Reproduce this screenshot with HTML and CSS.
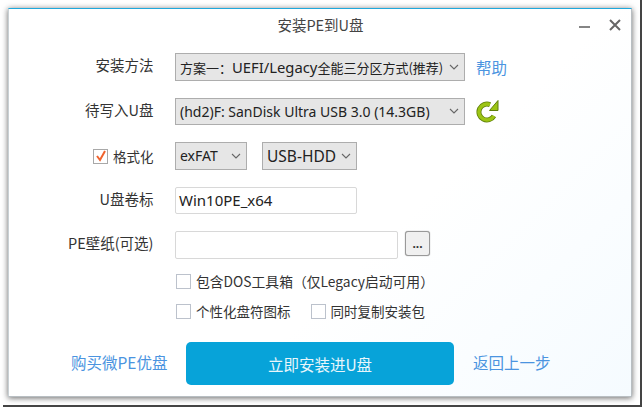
FILE: index.html
```html
<!DOCTYPE html>
<html lang="zh">
<head>
<meta charset="utf-8">
<title>安装PE到U盘</title>
<link rel="stylesheet" href="styles.css">
</head>
<body>
<div class="window">
  <header class="titlebar">
    <span class="title">安装PE到U盘</span>
    <div class="winctl">
      <svg width="12" height="12" viewBox="0 0 12 12"><path d="M0 8h11" stroke="#666" stroke-width="1.6"/></svg>
      <svg width="12" height="12" viewBox="0 0 12 12"><path d="M1 1l10 10M11 1L1 11" stroke="#666" stroke-width="2"/></svg>
    </div>
  </header>
  <main class="form">
    <div class="row">
      <label class="lbl">安装方法</label>
      <div class="select w290 cjk13"><span>方案一：<span class="latin-wide">UEFI/Legacy</span>全能三分区方式(推荐)</span><svg class="chev" width="10" height="6" viewBox="0 0 10 6"><path d="M1 1l4 4 4-4" fill="none" stroke="#666" stroke-width="1.1"/></svg></div>
      <a class="link help">帮助</a>
    </div>
    <div class="row">
      <label class="lbl">待写入U盘</label>
      <div class="select w290 latin14"><span>(hd2)F: SanDisk Ultra USB 3.0 (14.3GB)</span><svg class="chev" width="10" height="6" viewBox="0 0 10 6"><path d="M1 1l4 4 4-4" fill="none" stroke="#666" stroke-width="1.1"/></svg></div>
      <svg class="refresh" width="24" height="24" viewBox="0 0 24 24">
        <path d="M17.9 17A8 8 0 1 1 14 5.6" fill="none" stroke="#5f7f0a" stroke-width="5"/>
        <path d="M17.9 17A8 8 0 1 1 14 5.6" fill="none" stroke="#9cc414" stroke-width="3.4"/>
        <path d="M22 1.5V11.5H13.5Z" fill="#9cc414" stroke="#5f7f0a" stroke-width="1" stroke-linejoin="round"/>
      </svg>
    </div>
    <div class="row">
      <div class="lbl fmt">
        <span class="check on"><svg width="12" height="12" viewBox="0 0 12 12"><path d="M2 6l3 4 5-9" fill="none" stroke="#f0622d" stroke-width="2"/></svg></span>
        <span>格式化</span>
      </div>
      <div class="select w72 latin14"><span>exFAT</span><svg class="chev" width="10" height="6" viewBox="0 0 10 6"><path d="M1 1l4 4 4-4" fill="none" stroke="#666" stroke-width="1.1"/></svg></div>
      <div class="select w95 latin155"><span>USB-HDD</span><svg class="chev" width="10" height="6" viewBox="0 0 10 6"><path d="M1 1l4 4 4-4" fill="none" stroke="#666" stroke-width="1.1"/></svg></div>
    </div>
    <div class="row">
      <label class="lbl">U盘卷标</label>
      <div class="input w182">Win10PE_x64</div>
    </div>
    <div class="row">
      <label class="lbl">PE壁纸(可选)</label>
      <div class="input w223"></div>
      <button class="dots">...</button>
    </div>
    <div class="opts o1">
      <span class="opt wide"><span class="check"></span>包含DOS工具箱（仅Legacy启动可用）</span>
    </div>
    <div class="opts o2">
      <span class="opt"><span class="check"></span>个性化盘符图标</span>
      <span class="opt"><span class="check"></span>同时复制安装包</span>
    </div>
  </main>
  <footer class="actions">
    <a class="link buy">购买微PE优盘</a>
    <button class="install">立即安装进U盘</button>
    <a class="link back">返回上一步</a>
  </footer>
</div>
<div class="edge-right"></div>
<div class="edge-bottom"></div>
</body>
</html>
```
FILE: styles.css
```css
* { box-sizing: border-box; }
html, body { margin: 0; height: 100%; background: #fff; overflow: hidden; }
body {
  padding: 8px 0 0 8px;
  font-family: "Noto Sans CJK SC", "Noto Sans", sans-serif;
  font-size: 14.5px;
  color: #333;
}
.window {
  width: 624px;
  height: 389px;
  background: linear-gradient(135deg, #fff 60%, #f5fbff 100%);
  border-top: 1px solid #1ea8dc;
  border-left: 1px solid #c8d0d4;
  border-right: 1px solid #b8bec2;
  border-bottom: 1px solid #b8bec2;
  box-shadow: 0 1px 6px rgba(0,0,0,.6);
  display: flex;
  flex-direction: column;
}
.titlebar {
  height: 44px;
  display: flex;
  align-items: center;
  justify-content: center;
  position: relative;
  flex: none;
}
.title { color: #444; margin-top: -13px; margin-left: 1px; }
.winctl {
  position: absolute;
  right: 10px;
  top: 10px;
  display: flex;
  gap: 18px;
}
.form { flex: none; padding-left: 166px; }
.row { display: flex; align-items: center; position: relative; height: 27.5px; margin-bottom: 17px; }
.row:nth-child(5) { margin-bottom: 0; }
.lbl {
  position: absolute;
  right: calc(100% + 21.5px);
  top: 1px;
  white-space: nowrap;
  color: #333;
  font-size: 14.5px;
}
.fmt { display: flex; align-items: center; gap: 5px; font-size: 13.5px; top: 4px; }
.select {
  height: 100%;
  background: #e6e6e6;
  border: 1px solid #adadad;
  display: flex;
  align-items: center;
  justify-content: space-between;
  padding: 0 5px 0 4px;
  white-space: nowrap;
  color: #222;
}
.cjk13 { font-size: 13px; }
.latin-wide { font-family: "Noto Sans", sans-serif; font-size: 14.8px; }
.latin14 { font-family: "Noto Sans", sans-serif; font-size: 14px; }
.latin155 { font-family: "Noto Sans", sans-serif; font-size: 15.5px; }
.w290 { width: 290px; }
.w72 { width: 72px; }
.w95 { width: 95px; margin-left: 15px; }
.chev { flex: none; }
.link { color: #4b94e0; font-size: 15.5px; white-space: nowrap; }
.help { margin-left: 11px; }
.refresh { margin-left: 11px; }
.input {
  height: 100%;
  background: #fff;
  border: 1px solid #d8d8d8;
  border-radius: 2px;
  padding: 0 3px;
  display: flex;
  align-items: center;
  font: 15px "Noto Sans", sans-serif;
  color: #222;
}
.w182 { width: 182px; }
.w223 { width: 223px; }
.dots {
  width: 25px;
  height: 25px;
  align-self: flex-start;
  margin-left: 7px;
  border: 1px solid #999;
  border-radius: 3px;
  background: #f0f0f0;
  font: 700 12px "Noto Sans", sans-serif;
  color: #333;
  padding: 0;
  box-shadow: 0 0 1px #888;
}
.opts { display: flex; gap: 20px; height: 21px; align-items: center; padding-left: 1px; }
.o1 { margin-top: 12px; }
.o2 { margin-top: 9px; }
.opt { display: flex; align-items: center; gap: 5px; font-size: 13.5px; color: #333; white-space: nowrap; }
.wide { font-size: 13.8px; }
.check {
  width: 15px;
  height: 15px;
  border: 1px solid #bcc2cc;
  background: #fff;
  display: inline-flex;
  align-items: center;
  justify-content: center;
  flex: none;
}
.check.on { border-color: #a8a8a8; }
.actions { flex: none; margin-top: 20.5px; height: 43px; display: flex; align-items: center; padding-left: 62px; }
.buy { width: 115px; margin-bottom: 3px; }
.install {
  width: 268px;
  height: 43px;
  border: 0;
  border-radius: 5px;
  background: #07a3d9;
  color: #e8f6fb;
  font: 15.5px "Noto Sans CJK SC", sans-serif;
}
.back { margin-left: 19px; margin-bottom: 3px; }
.edge-right { position: absolute; left: 640px; top: 0; width: 2px; height: 406px; background: #444; }
.edge-bottom { position: absolute; left: 3px; top: 405px; width: 639px; height: 2px; background: #444; }
```
